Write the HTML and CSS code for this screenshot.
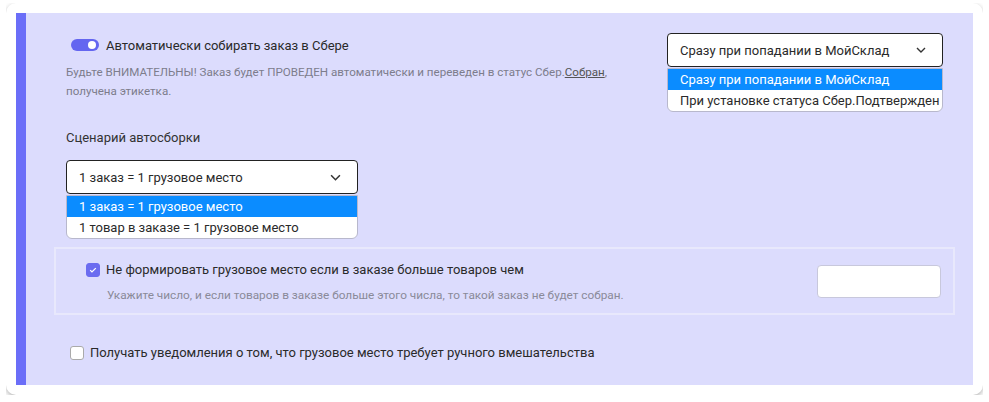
FILE: index.html
```html
<!DOCTYPE html>
<html lang="ru">
<head>
    <meta charset="UTF-8">
    <meta name="viewport" content="width=device-width, initial-scale=1.0">
    <title>Автосборка</title>
<link rel="stylesheet" href="styles.css">
</head>
<body>
    <div class="card">
     <div class="panel">

      <div class="top-row">
       <div class="auto">
        <div class="toggle-row">
         <span class="toggle"><span class="knob"></span></span>
         <span class="title">Автоматически собирать заказ в Сбере</span>
        </div>
        <p class="note">Будьте ВНИМАТЕЛЬНЫ! Заказ будет ПРОВЕДЕН автоматически и переведен в статус Сбер.<u>Собран</u>,<br>получена этикетка.</p>
       </div>

       <div class="dropdown wide">
        <div class="select">
         <span>Сразу при попадании в МойСклад</span>
         <svg class="chevron" viewBox="0 0 10 6" width="10" height="6"><path d="M1 1l4 4 4-4" fill="none" stroke="#333" stroke-width="1.4"/></svg>
        </div>
        <ul class="options">
         <li class="active">Сразу при попадании в МойСклад</li>
         <li>При установке статуса Сбер.Подтвержден</li>
        </ul>
       </div>
      </div>

      <div class="label">Сценарий автосборки</div>

      <div class="dropdown narrow">
       <div class="select">
        <span>1 заказ = 1 грузовое место</span>
        <svg class="chevron" viewBox="0 0 10 6" width="11" height="7"><path d="M1 1l4 4 4-4" fill="none" stroke="#333" stroke-width="1.4"/></svg>
       </div>
       <ul class="options">
        <li class="active">1 заказ = 1 грузовое место</li>
        <li>1 товар в заказе = 1 грузовое место</li>
       </ul>
      </div>

      <div class="limit-box">
       <div class="limit-text">
        <div class="check-row">
         <span class="checkbox checked">
          <svg viewBox="0 0 10 10" width="8" height="8"><path d="M1.5 5.2l2.2 2.2 4.8-4.8" fill="none" stroke="#fff" stroke-width="1.6"/></svg>
         </span>
         <span>Не формировать грузовое место если в заказе больше товаров чем</span>
        </div>
        <div class="hint">Укажите число, и если товаров в заказе больше этого числа, то такой заказ не будет собран.</div>
       </div>
       <input type="text" class="count-input">
      </div>

      <div class="check-row notify">
       <span class="checkbox"></span>
       <span>Получать уведомления о том, что грузовое место требует ручного вмешательства</span>
      </div>

     </div>
    </div>
</body>
</html>
```

FILE: styles.css
```css
 body{
   margin: 3px 6px;
   background-color: #fff;
   font-family: Roboto, "Noto Sans", sans-serif;
   font-size: 13px;
   color: #2a2a2a;
 }

 .card{
   width: 977px;
   box-sizing: border-box;
   padding: 10px;
   background-color: #fff;
   border-radius: 10px;
   box-shadow: 0 2px 5px rgba(0, 0, 0, 0.3);
 }

 .panel{
   background-color: #dcdcfd;
   border-left: 10px solid #6b6ef8;
   padding: 20px 30px 23px 40px;
 }

 .top-row{
   display: flex;
   justify-content: space-between;
   align-items: flex-start;
 }

 .toggle-row{
   display: flex;
   align-items: center;
   height: 24px;
   margin-left: 5px;
 }

 .toggle{
   position: relative;
   width: 28px;
   height: 12px;
   border-radius: 6px;
   background-color: #6466f0;
   margin-right: 7px;
 }

 .knob{
   position: absolute;
   right: 3px;
   top: 2px;
   width: 8px;
   height: 8px;
   border-radius: 50%;
   background-color: #fff;
 }

 .note{
   margin: 6px 0 0;
   font-size: 11.6px;
   line-height: 19px;
   color: #7d7d8c;
 }

 .note u{
   color: #555;
 }

 .dropdown{
   display: flex;
   flex-direction: column;
 }

 .dropdown.wide{
   width: 276px;
 }

 .dropdown.narrow{
   width: 292px;
 }

 .select{
   display: flex;
   align-items: center;
   justify-content: space-between;
   height: 34px;
   box-sizing: border-box;
   padding: 0 16px 0 12px;
   background-color: #fff;
   border: 1px solid #222;
   border-radius: 4px;
 }

 .options{
   list-style-type: none;
   margin: 1px 0 0;
   padding: 0;
   background-color: #fff;
   border: 1px solid #b8b8cc;
   border-radius: 0 0 6px 6px;
   overflow: hidden;
 }

 .options li{
   height: 21px;
   line-height: 21px;
   padding-left: 12px;
   white-space: nowrap;
 }

 .options li.active{
   background-color: #0b8cff;
   color: #fff;
 }

 .label{
   margin-top: 17px;
   line-height: 18px;
   color: #333;
 }

 .narrow{
   margin-top: 13px;
 }

 .limit-box{
   display: flex;
   align-items: center;
   justify-content: space-between;
   margin: 8px -12px 0;
   height: 68px;
   box-sizing: border-box;
   border: 2px solid #e8e8fc;
   padding: 0 12px 0 30px;
 }

 .check-row{
   display: flex;
   align-items: center;
   line-height: 18px;
 }

 .checkbox{
   display: flex;
   align-items: center;
   justify-content: center;
   width: 14px;
   height: 14px;
   box-sizing: border-box;
   border-radius: 3px;
   background-color: #fff;
   border: 1px solid #aaa;
   margin-right: 6px;
 }

 .checkbox.checked{
   background-color: #6b6cf0;
   border-color: #6b6cf0;
 }

 .hint{
   margin: 9px 0 0 21px;
   font-size: 11.8px;
   color: #8a8a99;
 }

 .count-input{
   width: 124px;
   height: 33px;
   box-sizing: border-box;
   border: 1px solid #c8c8dc;
   border-radius: 4px;
   background-color: #fff;
 }

 .notify{
   margin: 29px 0 0 4px;
 }
```
